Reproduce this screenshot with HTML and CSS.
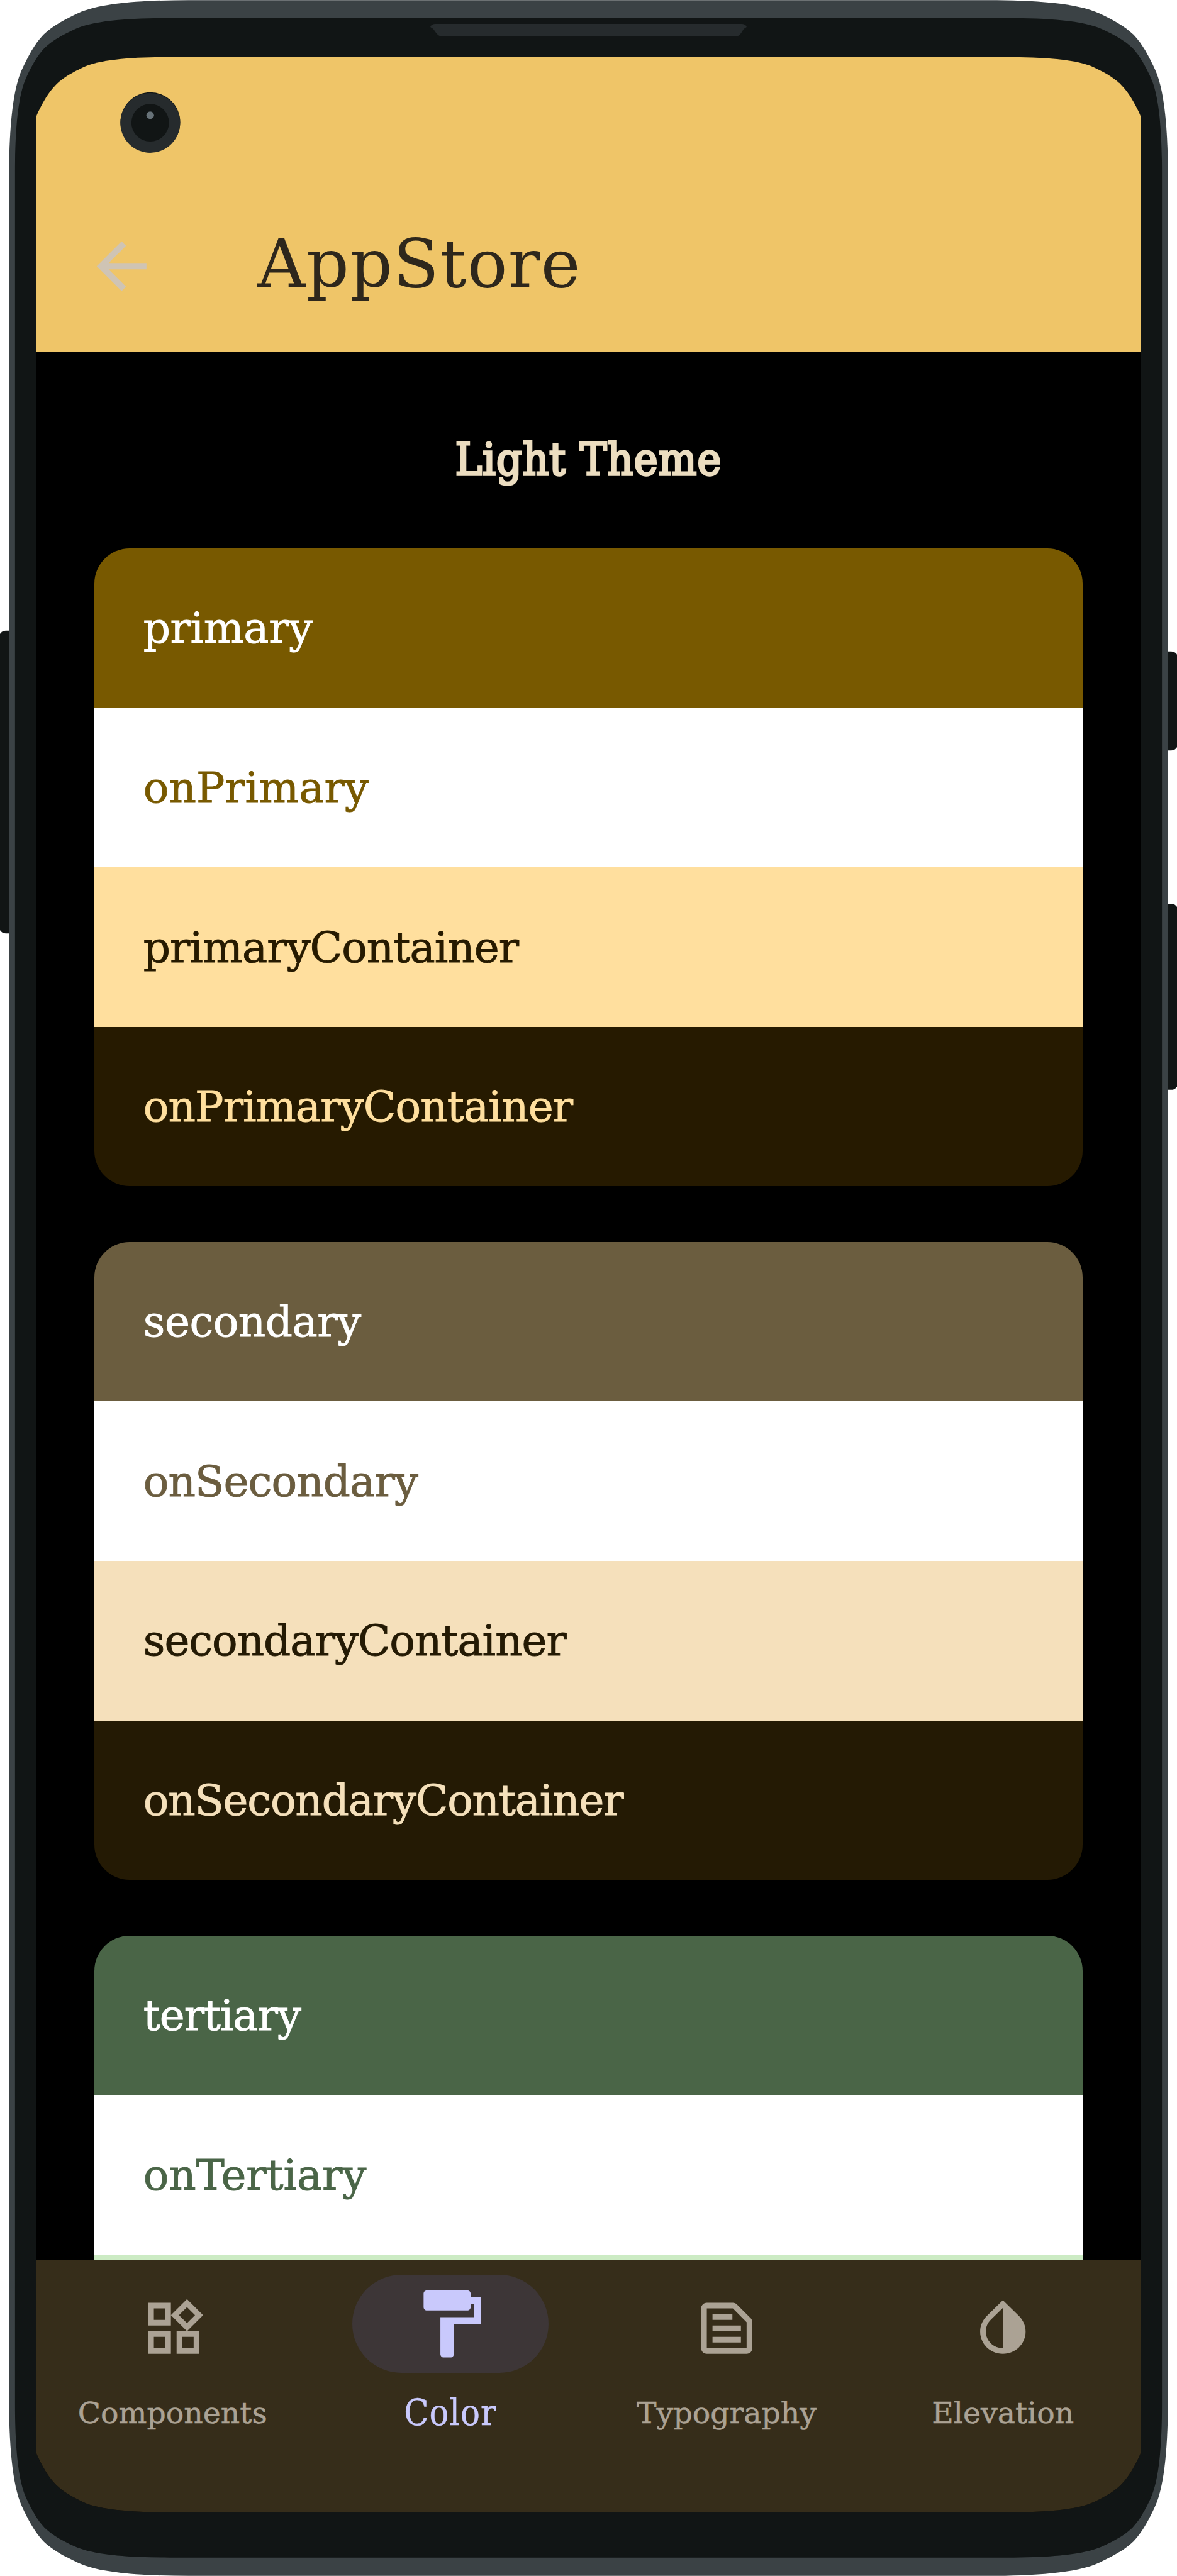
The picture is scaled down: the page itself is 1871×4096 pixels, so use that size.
FILE: index.html
```html
<!DOCTYPE html>
<html lang="en">
<head>
<meta charset="utf-8">
<title>AppStore</title>
<link rel="stylesheet" href="styles.css">
</head>
<body>
<div class="device">
  <svg class="device-frame" viewBox="0 0 3408 7460" aria-hidden="true">
    <defs>
      <clipPath id="screen-clip" clipPathUnits="userSpaceOnUse">
        <path transform="scale(.549)" d="M-24,416 C-24,312 -18,211 6,160 C20,131 36,102 58,80 C80,58 107,44 136,30 C187,6 286,0 390,0 H2810 C2914,0 3013,6 3064,30 C3093,44 3120,58 3142,80 C3164,102 3180,131 3194,160 C3218,211 3224,312 3224,416 V6695 C3224,6799 3218,6900 3194,6951 C3180,6980 3164,7009 3142,7031 C3120,7053 3093,7067 3064,7081 C3013,7105 2914,7111 2810,7111 H390 C286,7111 187,7105 136,7081 C107,7067 80,7053 58,7031 C36,7009 20,6980 6,6951 C-18,6900 -24,6799 -24,6695 Z"/>
      </clipPath>
    </defs>
    <g fill="#111515">
      <rect x="-3" y="1826" width="80" height="877" rx="20"/>
      <rect x="3331" y="1886" width="80" height="287" rx="20"/>
      <rect x="3331" y="2617" width="80" height="539" rx="20"/>
    </g>
    <path fill="#3b4245" d="M26,520 C26,390 34,264 64,200 C81,164 99,128 126,100 C154,73 190,55 226,38 C290,8 416,0 546,0 H2862 C2992,0 3118,8 3182,38 C3218,55 3254,73 3282,100 C3309,128 3327,164 3344,200 C3374,264 3382,390 3382,520 V6940 C3382,7070 3374,7196 3344,7260 C3327,7296 3309,7332 3282,7360 C3254,7387 3218,7405 3182,7422 C3118,7452 2992,7460 2862,7460 H546 C416,7460 290,7452 226,7422 C190,7405 154,7387 126,7360 C99,7332 81,7296 64,7260 C34,7196 26,7070 26,6940 Z"/>
    <path fill="#111515" d="M43.5,498 C43.5,386 50.5,278 76.5,223 C90.5,193 106.5,162 129.5,138 C153.5,115 184.5,99 214.5,85 C269.5,59 377.5,52 489.5,52 H2918.5 C3030.5,52 3138.5,59 3193.5,85 C3223.5,99 3254.5,115 3278.5,138 C3301.5,162 3317.5,193 3331.5,223 C3357.5,278 3364.5,386 3364.5,498 V6961 C3364.5,7073 3357.5,7181 3331.5,7236 C3317.5,7266 3301.5,7297 3278.5,7321 C3254.5,7344 3223.5,7360 3193.5,7374 C3138.5,7400 3030.5,7407 2918.5,7407 H489.5 C377.5,7407 269.5,7400 214.5,7374 C184.5,7360 153.5,7344 129.5,7321 C106.5,7297 90.5,7266 76.5,7236 C50.5,7181 43.5,7073 43.5,6961 Z"/>
    <path fill="#262b2d" d="M1259,69 H2149 Q2154,69 2159,73 Q2165,78 2158,80 C2149,84 2146,104 2133,104 H1277 C1264,104 1259,84 1250,80 Q1243,78 1249,73 Q1254,69 1259,69 Z"/>
  </svg>

  <main class="screen">
    <header class="app-bar">
      <svg class="back" viewBox="0 0 24 24" role="img" aria-label="Back"><path d="M20 11H7.83l5.59-5.59L12 4l-8 8 8 8 1.41-1.41L7.83 13H20z"/></svg>
      <h1 class="app-title">AppStore</h1>
    </header>

    <section class="content">
      <h2 class="theme-title">Light Theme</h2>
      <div class="cards">
        <div class="card">
          <div class="row primary">primary</div>
          <div class="row on-primary">onPrimary</div>
          <div class="row primary-container">primaryContainer</div>
          <div class="row on-primary-container">onPrimaryContainer</div>
        </div>
        <div class="card">
          <div class="row secondary">secondary</div>
          <div class="row on-secondary">onSecondary</div>
          <div class="row secondary-container">secondaryContainer</div>
          <div class="row on-secondary-container">onSecondaryContainer</div>
        </div>
        <div class="card">
          <div class="row tertiary">tertiary</div>
          <div class="row on-tertiary">onTertiary</div>
          <div class="row tertiary-container"></div>
        </div>
      </div>
    </section>

    <nav class="nav">
      <div class="nav-item">
        <div class="nav-icon"><svg viewBox="0 0 24 24"><path d="M16.66 4.52l2.83 2.83-2.83 2.83-2.83-2.83 2.83-2.83M9 5v4H5V5h4m10 10v4h-4v-4h4M9 15v4H5v-4h4m7.66-13.31L11 7.34 16.66 13l5.66-5.66-5.66-5.65zM11 3H3v8h8V3zm10 10h-8v8h8v-8zm-10 0H3v8h8v-8z"/></svg></div>
        <span class="nav-label components">Components</span>
      </div>
      <div class="nav-item active">
        <div class="nav-icon"><svg viewBox="0 0 24 24"><path d="M18 4V3c0-.55-.45-1-1-1H5c-.55 0-1 .45-1 1v4c0 .55.45 1 1 1h12c.55 0 1-.45 1-1V6h1v4H9v11c0 .55.45 1 1 1h2c.55 0 1-.45 1-1v-9h8V4h-3z"/></svg></div>
        <span class="nav-label">Color</span>
      </div>
      <div class="nav-item">
        <div class="nav-icon"><svg viewBox="0 0 24 24"><path d="M14.17 5L19 9.83V19H5V5h9.17m0-2H5c-1.1 0-2 .9-2 2v14c0 1.1.9 2 2 2h14c1.1 0 2-.9 2-2V9.83c0-.53-.21-1.04-.59-1.41l-4.83-4.83c-.37-.38-.88-.59-1.41-.59zM7 15h10v2H7v-2zm0-4h10v2H7v-2zm0-4h7v2H7V7z"/></svg></div>
        <span class="nav-label">Typography</span>
      </div>
      <div class="nav-item">
        <div class="nav-icon"><svg viewBox="0 0 24 24"><path d="M12 4.81V19c-3.31 0-6-2.63-6-5.87 0-1.56.62-3.03 1.75-4.14L12 4.81M12 2.1L6.35 7.66C4.9 9.1 4 11.05 4 13.13 4 17.48 7.58 21 12 21s8-3.52 8-7.87c0-2.09-.9-4.04-2.35-5.47L12 2.1z"/></svg></div>
        <span class="nav-label">Elevation</span>
      </div>
    </nav>
  </main>

  <svg class="camera" viewBox="0 0 174 178" aria-hidden="true">
    <circle cx="87.5" cy="88" r="86.5" fill="#111515"/>
    <circle cx="87" cy="90" r="86.5" fill="#262b2d"/>
    <circle cx="87" cy="89.5" r="54.5" fill="#111515"/>
    <circle cx="87" cy="68" r="11" fill="#677278"/>
  </svg>
</div>
</body>
</html>
```
FILE: styles.css
```css
:root {
  --u: 0.549px;
}

* {
  box-sizing: border-box;
}

body {
  margin: 0;
  background: #fff;
  font-family: "DejaVu Serif", serif;
}

.device {
  position: relative;
  width: 1871px;
  height: 4096px;
  padding: calc(165.3 * var(--u)) 0 0 calc(104 * var(--u));
  overflow: hidden;
}

.device-frame {
  position: absolute;
  inset: 0;
  width: 100%;
  height: 100%;
}

.camera {
  position: absolute;
  left: calc(348 * var(--u));
  top: calc(266.5 * var(--u));
  width: calc(174 * var(--u));
  height: calc(178 * var(--u));
}

.screen {
  position: relative;
  display: flex;
  flex-direction: column;
  width: calc(3200 * var(--u));
  height: calc(7111 * var(--u));
  background: #000;
  clip-path: url(#screen-clip);
}

.app-bar {
  display: flex;
  align-items: center;
  flex: none;
  height: calc(853 * var(--u));
  padding: calc(357 * var(--u)) 0 0 calc(140.6 * var(--u));
  background: #efc568;
}

.back {
  width: calc(216 * var(--u));
  height: calc(216 * var(--u));
  fill: #cfc4b4;
}

.app-title {
  margin: 0 0 calc(11 * var(--u)) calc(285 * var(--u));
  color: #2e271c;
  font-size: 106px;
  font-weight: 400;
  line-height: 1.2;
  letter-spacing: 1.2px;
}

.content {
  flex: 1;
  min-height: 0;
  overflow: hidden;
  padding: calc(233.5 * var(--u)) calc(168.5 * var(--u)) 0 calc(169 * var(--u));
}

.theme-title {
  margin: 0 0 calc(176.5 * var(--u));
  color: #ecddc0;
  font-size: 71px;
  font-weight: 400;
  font-stretch: condensed;
  line-height: calc(160 * var(--u));
  letter-spacing: 1.2px;
  text-align: center;
  -webkit-text-stroke: 3.4px #ecddc0;
}

.cards {
  display: flex;
  flex-direction: column;
  gap: calc(161 * var(--u));
}

.card {
  border-radius: calc(102 * var(--u));
  overflow: hidden;
}

.row {
  display: flex;
  align-items: center;
  height: calc(462 * var(--u));
  padding-left: calc(142 * var(--u));
  font-size: 67.5px;
  letter-spacing: -0.9px;
  -webkit-text-stroke: 0.9px currentColor;
}

.primary { background: #785900; color: #fff; letter-spacing: -0.4px; }
.on-primary { background: #fff; color: #785900; letter-spacing: 0; }
.primary-container { background: #ffdf9e; color: #261a00; letter-spacing: -1px; }
.on-primary-container { background: #261a00; color: #ffdf9e; }
.secondary { background: #6b5d3f; color: #fff; letter-spacing: -0.5px; }
.on-secondary { background: #fff; color: #6b5d3f; }
.secondary-container { background: #f5e0bb; color: #241a04; letter-spacing: -1.05px; }
.on-secondary-container { background: #241a04; color: #f5e0bb; letter-spacing: -1.2px; }
.tertiary { background: #4a6547; color: #fff; letter-spacing: -1.1px; }
.on-tertiary { background: #fff; color: #4a6547; letter-spacing: -0.1px; }
.tertiary-container { background: #ccebc4; }

.nav {
  display: grid;
  grid-template-columns: repeat(4, 1fr);
  flex: none;
  height: calc(729 * var(--u));
  background: #362d1a;
  color: #aba294;
}

.nav-item {
  display: flex;
  flex-direction: column;
  align-items: center;
  padding-top: calc(40.5 * var(--u));
}

.nav-icon {
  display: flex;
  align-items: center;
  justify-content: center;
  width: calc(567 * var(--u));
  height: calc(285 * var(--u));
  padding-top: calc(26 * var(--u));
  border-radius: calc(142.5 * var(--u));
}

.nav-icon svg {
  width: calc(197.5 * var(--u));
  height: calc(197.5 * var(--u));
  fill: currentColor;
}

.nav-label {
  margin-top: calc(56 * var(--u));
  font-size: 47.4px;
  line-height: calc(120 * var(--u));
  -webkit-text-stroke: 0.5px currentColor;
}

.components {
  margin-right: 5px;
}

.active {
  color: #c9c9fc;
}

.active .nav-icon {
  padding-top: 0;
  background: #3d3637;
}

.active .nav-icon svg {
  width: calc(233.5 * var(--u));
  height: calc(233.5 * var(--u));
}

.active .nav-label {
  font-size: 57px;
  font-stretch: condensed;
  letter-spacing: 1.1px;
}
```
